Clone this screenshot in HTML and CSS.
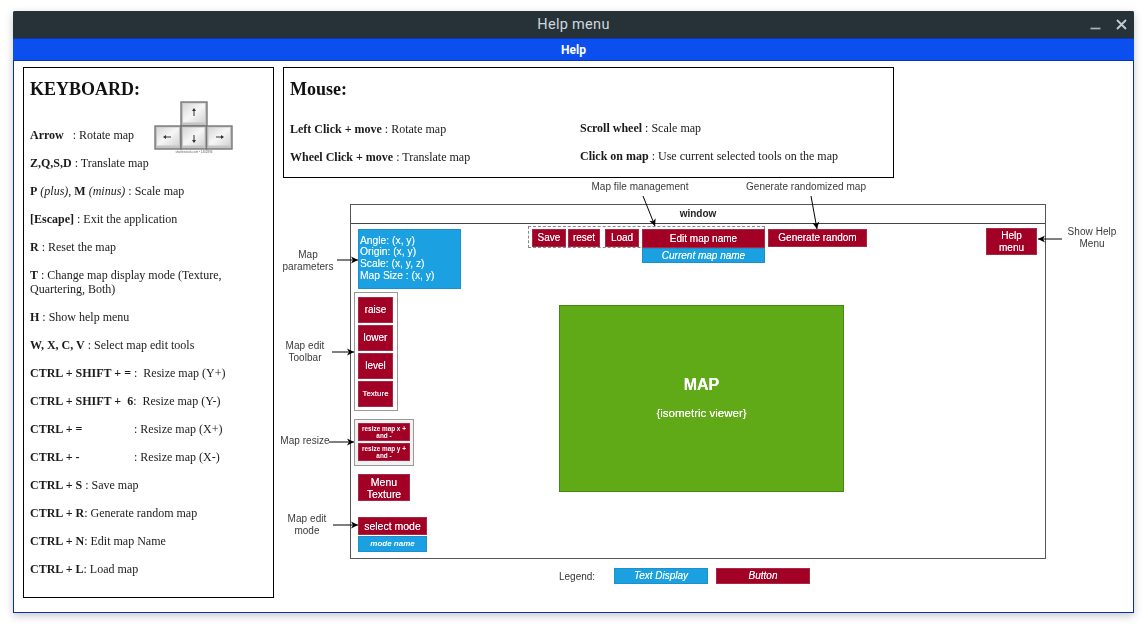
FILE: index.html
```html
<!DOCTYPE html>
<html lang="en">
<head>
<meta charset="utf-8">
<title>Help menu</title>
<link rel="stylesheet" href="styles.css">
</head>
<body>
<div class="window">
  <header class="titlebar">
    <span class="title">Help menu</span>
    <div class="controls">
      <svg class="ctl" width="11" height="11" viewBox="0 0 11 11"><path d="M0.500 9.500H10.500" stroke="#aab3b7" stroke-width="1.700"/></svg>
      <svg class="ctl" width="11" height="11" viewBox="0 0 11 11"><path d="M1 1L10 10M10 1L1 10" stroke="#c6cdd0" stroke-width="1.800"/></svg>
    </div>
  </header>
  <div class="subbar">Help</div>
  <main class="content">
    <section class="panel keyboard">
      <h1>KEYBOARD:</h1>
      <div class="arrow-row">
        <p><b>Arrow</b> &nbsp; : Rotate map</p>
        <div class="keys">
          <svg width="80" height="50" viewBox="0 0 80 50">
            <defs>
              <linearGradient id="cap" x1="0" y1="0" x2="1" y2="1"><stop offset="0" stop-color="#d6d6d6"/><stop offset=".5" stop-color="#f6f6f6"/><stop offset="1" stop-color="#d4d4d4"/></linearGradient>
            </defs>
            <g fill="#c4c4c4" stroke="#777" stroke-width="1.400">
              <rect x="27" y="1" width="26" height="24"/>
              <rect x="1" y="25" width="26" height="23"/>
              <rect x="27" y="25" width="25.500" height="23"/>
              <rect x="52.500" y="25" width="25.500" height="23"/>
            </g>
            <g fill="url(#cap)">
              <rect x="29" y="2.500" width="22" height="19"/>
              <rect x="3" y="26.500" width="22" height="18"/>
              <rect x="29" y="26.500" width="21.500" height="18"/>
              <rect x="54.500" y="26.500" width="21.500" height="18"/>
            </g>
            <g stroke="#333" stroke-width="1" fill="#333">
              <path d="M40 15V9" fill="none"/><path d="M38 10L40 7L42 10Z" stroke="none"/>
              <path d="M40 34V41" fill="none"/><path d="M38 39L40 42L42 39Z" stroke="none"/>
              <path d="M17 36H11" fill="none"/><path d="M12 34L9 36L12 38Z" stroke="none"/>
              <path d="M62 36H69" fill="none"/><path d="M67 34L70 36L67 38Z" stroke="none"/>
            </g>
          </svg>
          <span class="stock">shutterstock.com • 1402896</span>
        </div>
      </div>
      <p><b>Z,Q,S,D</b> : Translate map</p>
      <p><b>P</b> <i>(plus)</i>, <b>M</b> <i>(minus)</i> : Scale map</p>
      <p><b>[Escape]</b> : Exit the application</p>
      <p><b>R</b> : Reset the map</p>
      <p><b>T</b> : Change map display mode (Texture, Quartering, Both)</p>
      <p><b>H</b> : Show help menu</p>
      <p><b>W, X, C, V</b> : Select map edit tools</p>
      <p><b>CTRL + SHIFT + =</b> :&nbsp; Resize map (Y+)</p>
      <p><b>CTRL + SHIFT +&nbsp; 6</b>:&nbsp; Resize map (Y-)</p>
      <p><b class="wide-key">CTRL + =</b>: Resize map (X+)</p>
      <p><b class="wide-key">CTRL + -</b>: Resize map (X-)</p>
      <p><b>CTRL + S</b> : Save map</p>
      <p><b>CTRL + R</b>: Generate random map</p>
      <p><b>CTRL + N</b>: Edit map Name</p>
      <p><b>CTRL + L</b>: Load map</p>
    </section>

    <div class="right">
      <section class="panel mouse">
        <h2>Mouse:</h2>
        <div class="mouse-grid">
          <p><b>Left Click + move</b> : Rotate map</p>
          <p class="up"><b>Scroll wheel</b> : Scale map</p>
          <p><b>Wheel Click + move</b> : Translate map</p>
          <p class="up"><b>Click on map</b> : Use current selected tools on the map</p>
        </div>
      </section>

      <div class="diagram">
        <div class="app-window"><div class="app-title">window</div></div>

        <div class="box info params">Angle: (x, y)<br>Origin: (x, y)<br>Scale: (x, y, z)<br>Map Size : (x, y)</div>

        <div class="group toolbar">
          <div class="box btn">raise</div>
          <div class="box btn">lower</div>
          <div class="box btn">level</div>
          <div class="box btn small">Texture</div>
        </div>

        <div class="group resize">
          <div class="box btn tiny">resize map x +<br>and -</div>
          <div class="box btn tiny">resize map y +<br>and -</div>
        </div>

        <div class="box btn menu-texture">Menu<br>Texture</div>

        <div class="mode">
          <div class="box btn select-mode">select mode</div>
          <div class="box info mode-name">mode name</div>
        </div>

        <div class="file-group"></div>
        <div class="file-row">
          <div class="box btn save">Save</div>
          <div class="box btn reset">reset</div>
          <div class="box btn load">Load</div>
          <div class="name-col">
            <div class="box btn edit-name">Edit map name</div>
            <div class="box info current-name">Current map name</div>
          </div>
          <div class="box btn generate">Generate random</div>
        </div>

        <div class="box btn help-btn">Help<br>menu</div>

        <div class="map"><strong>MAP</strong><span>{isometric viewer}</span></div>

        <div class="label l-params">Map<br>parameters</div>
        <div class="label l-toolbar">Map edit<br>Toolbar</div>
        <div class="label l-resize">Map resize</div>
        <div class="label l-mode">Map edit<br>mode</div>
        <div class="label l-file">Map file management</div>
        <div class="label l-gen">Generate randomized map</div>
        <div class="label l-help">Show Help<br>Menu</div>

        <div class="legend">
          <span class="legend-label">Legend:</span>
          <div class="box info legend-box">Text Display</div>
          <div class="box btn legend-box">Button</div>
        </div>

        <svg class="arrows" width="859" height="434" viewBox="0 0 859 434">
          <defs>
            <marker id="ah" markerWidth="8" markerHeight="8" refX="7" refY="4" orient="auto" markerUnits="userSpaceOnUse"><path d="M0 0.500L7 4L0 7.500L2 4Z" fill="#000"/></marker>
          </defs>
          <g stroke="#000" stroke-width="1" fill="none">
            <path d="M62 82H83" marker-end="url(#ah)"/>
            <path d="M57 174H79" marker-end="url(#ah)"/>
            <path d="M54 264H79" marker-end="url(#ah)"/>
            <path d="M58 347H83" marker-end="url(#ah)"/>
            <path d="M368 18L380 48" marker-end="url(#ah)"/>
            <path d="M536 18L542 51" marker-end="url(#ah)"/>
            <path d="M787 61H763" marker-end="url(#ah)"/>
          </g>
        </svg>
      </div>
    </div>
  </main>
</div>
</body>
</html>
```

FILE: styles.css
```css
* { box-sizing: border-box; }
html, body { margin: 0; padding: 0; background: #fff; }
body { height: 629px; overflow: hidden; }

.window {
  width: 1121px;
  height: 602px;
  margin: 11px 0 0 13px;
  display: flex;
  flex-direction: column;
  background: #fff;
  border: 1px solid #0b2fa8;
  border-top: 0;
  border-radius: 2px 2px 0 0;
  box-shadow: 0 3px 8px rgba(0, 0, 0, .22);
}

.titlebar {
  position: relative;
  height: 27px;
  margin: 0 -1px;
  background: #263238;
  border-radius: 2px 2px 0 0;
  display: flex;
  align-items: center;
  justify-content: center;
  flex: none;
}
.title {
  font: 400 14.500px Roboto, "Noto Sans", sans-serif;
  color: #cfd8dc;
  letter-spacing: .3px;
}
.controls {
  position: absolute;
  right: 7px;
  top: 8px;
  display: flex;
  gap: 15px;
}
.subbar {
  height: 23px;
  margin: 0 -1px;
  flex: none;
  background: #0b50ef;
  border-top: 1px solid #0a35b5;
  border-bottom: 1px solid #0a35b5;
  color: #fff;
  font: 700 12px Roboto, "Noto Sans", sans-serif;
  text-align: center;
  line-height: 23px;
}

.content {
  flex: 1;
  display: flex;
  padding: 6px 0 0 9px;
  gap: 1px;
  min-height: 0;
}

.panel {
  border: 1px solid #000;
  font-family: "Liberation Serif", "Times New Roman", serif;
  font-size: 12px;
  color: #1a1a1a;
  filter: blur(.25px);
}
.panel p { margin: 0; line-height: 14px; }

.keyboard {
  width: 251px;
  height: 531px;
  padding: 0 6px;
  flex: none;
  display: flex;
  flex-direction: column;
  gap: 14px;
}
.keyboard h1 {
  margin: 11px 0 14px;
  font-size: 18px;
  line-height: 20px;
  color: #111;
}
.arrow-row { position: relative; height: 14px; margin-top: 1px; }
.keys {
  position: absolute;
  left: 124px;
  top: -27px;
  width: 80px;
  filter: blur(.7px);
}
.keys svg { display: block; }
.stock {
  display: block;
  margin-top: -1px;
  font: 3px "Liberation Sans", Arial, sans-serif;
  color: #666;
  text-align: center;
  white-space: nowrap;
}
.wide-key { display: inline-block; width: 104px; }

.right { flex: 1; display: flex; flex-direction: column; }
.mouse {
  width: 611px;
  height: 111px;
  margin-left: 8px;
  padding: 0 6px;
  flex: none;
}
.mouse h2 {
  margin: 12px 0 23px;
  font-size: 18px;
  line-height: 19px;
  color: #111;
}
.mouse-grid {
  display: grid;
  grid-template-columns: 290px 1fr;
  row-gap: 14px;
}
.mouse-grid .up { position: relative; top: -1px; }

.diagram {
  position: relative;
  flex: 1;
  font-family: "Liberation Sans", Arial, sans-serif;
  font-size: 10px;
  filter: blur(.35px);
}

.app-window {
  position: absolute;
  left: 75px; top: 26px;
  width: 696px; height: 355px;
  border: 1px solid #555;
}
.app-title {
  height: 19px;
  border-bottom: 1px solid #444;
  text-align: center;
  font-weight: 700;
  font-size: 10px;
  line-height: 18px;
  color: #222;
}

.box {
  display: flex;
  align-items: center;
  justify-content: center;
  text-align: center;
  color: #fff;
  line-height: 12px;
  text-shadow: 0 0 .3px rgba(255, 255, 255, .7);
}
.btn { background: #a20025; border: 1px solid #a52a45; }
.info { background: #1ba1e2; border: 1px solid #1f8fcb; }

.params {
  position: absolute;
  left: 83px; top: 51px;
  width: 103px; height: 60px;
  display: block;
  padding: 4.500px 1px;
  text-align: left;
  font-size: 10.300px;
  line-height: 11.800px;
  color: #f1f8fc;
}
.group {
  position: absolute;
  display: flex;
  flex-direction: column;
  border: 1px solid #999;
  background: #fff;
}
.toolbar {
  left: 79px; top: 114px;
  width: 44px; height: 119px;
  padding: 4px 4px 4px 3px;
  gap: 2px;
}
.toolbar .btn { height: 26px; flex: none; font-size: 10px; }
.toolbar .small { height: 26px; font-size: 8px; }
.resize {
  left: 79px; top: 241px;
  width: 60px; height: 47px;
  padding: 3px 3px;
  gap: 2px;
  background: #f2f2f2;
}
.tiny { height: 18px; font-size: 6.400px; line-height: 7.500px; font-weight: 700; text-shadow: none; }

.menu-texture {
  position: absolute;
  left: 83px; top: 296px;
  width: 52px; height: 27px;
  font-size: 10.500px;
}
.mode {
  position: absolute;
  left: 83px; top: 339px;
  width: 69px;
  display: flex;
  flex-direction: column;
  gap: 1px;
}
.select-mode { height: 18px; font-size: 10.500px; }
.mode-name { height: 16px; font-size: 8px; font-style: italic; font-weight: 700; text-shadow: none; }

.file-group {
  position: absolute;
  left: 253px; top: 48px;
  width: 237px; height: 22px;
  border: 1px dashed #888;
}
.file-row {
  position: absolute;
  left: 257px; top: 51px;
  display: flex;
  align-items: flex-start;
}
.file-row .btn { height: 18px; }
.file-row .edit-name { height: 19px; }
.save { width: 34px; margin-right: 2px; }
.reset { width: 32px; margin-right: 5px; }
.load { width: 34px; margin-right: 3px; }
.name-col { width: 123px; margin-right: 3px; display: flex; flex-direction: column; }
.current-name { height: 15px; font-style: italic; }
.generate { width: 99px; }

.help-btn {
  position: absolute;
  left: 711px; top: 50px;
  width: 51px; height: 27px;
}

.map {
  position: absolute;
  left: 284px; top: 127px;
  width: 285px; height: 187px;
  background: #60a917;
  border: 1px solid #3f8a10;
  color: #fff;
  display: flex;
  flex-direction: column;
  align-items: center;
  justify-content: center;
  gap: 14px;
  padding-bottom: 2px;
  text-shadow: 0 0 .3px #fff;
}
.map strong { font-size: 16px; line-height: 17px; }
.map span { font-size: 11.500px; line-height: 12px; }

.label {
  position: absolute;
  text-align: center;
  color: #3a3a3a;
  line-height: 12px;
  letter-spacing: .05px;
  white-space: nowrap;
  transform: translateX(-50%);
}
.l-params { left: 33px; top: 71px; }
.l-toolbar { left: 30px; top: 162px; }
.l-resize { left: 30px; top: 257px; }
.l-mode { left: 32px; top: 335px; }
.l-file { left: 365px; top: 3px; }
.l-gen { left: 531px; top: 3px; }
.l-help { left: 817px; top: 48px; }

.legend {
  position: absolute;
  left: 284px; top: 390px;
  display: flex;
  align-items: center;
}
.legend-label { width: 55px; color: #333; }
.legend-box { width: 94px; height: 16px; font-style: italic; margin-right: 8px; }

.arrows { position: absolute; left: 0; top: 0; pointer-events: none; }
```
